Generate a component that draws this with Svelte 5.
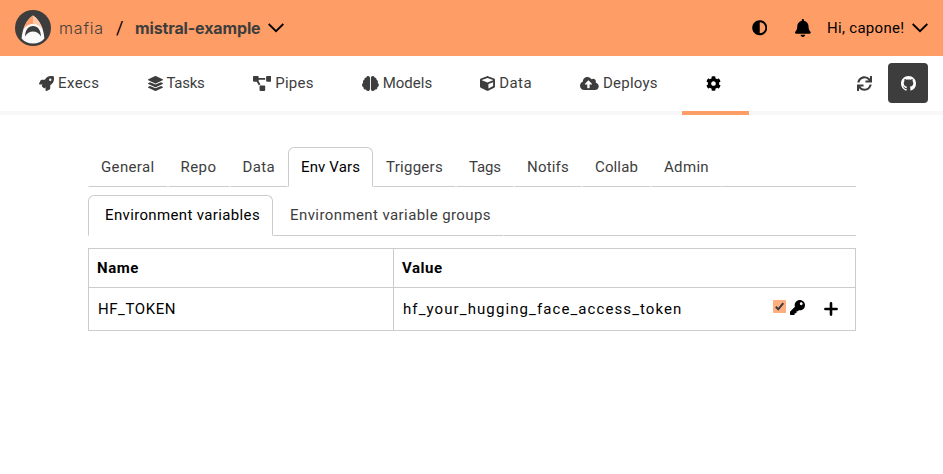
<script>
  const icons = {
    rocket: { w: 512, d: 'M505.12 19.09c-1.19-5.53-6.66-11-12.21-12.18C460.72 0 435.51 0 410.41 0 307.18 0 245.27 55.2 199.05 128H94.84c-16.35.02-35.56 11.88-42.89 26.48L2.52 253.3A28.4 28.4 0 0 0 0 264a24 24 0 0 0 24 24h103.82l-22.48 22.47c-11.36 11.36-13 32.26 0 45.25l50.91 50.9c11.15 11.19 32.15 13.16 45.27 0L224 384.16V488a24 24 0 0 0 24 24 28.56 28.56 0 0 0 10.71-2.52l98.73-49.39c14.63-7.3 26.5-26.5 26.5-42.86V312.8C456.6 266.48 512 204.4 512 101.7c.08-25.2.08-50.4-6.88-82.61ZM384.04 168A40 40 0 1 1 424.05 128a40.02 40.02 0 0 1-40.01 40Z' },
    layers: { w: 512, d: 'M12.41 148.02l232.94 105.67c6.8 3.09 14.49 3.09 21.29 0l232.94-105.67c16.55-7.51 16.55-32.52 0-40.03L266.65 2.31a25.607 25.607 0 0 0-21.29 0L12.41 107.98c-16.55 7.51-16.55 32.53 0 40.04zm487.18 88.28l-58.09-26.33-161.64 73.27c-7.56 3.43-15.59 5.17-23.86 5.17s-16.29-1.74-23.86-5.17L70.51 209.97l-58.1 26.33c-16.55 7.5-16.55 32.5 0 40l232.94 105.59c6.8 3.08 14.49 3.08 21.29 0L499.59 276.3c16.55-7.5 16.55-32.5 0-40zm0 127.8l-57.87-26.23-161.86 73.37c-7.56 3.43-15.59 5.17-23.86 5.17s-16.29-1.74-23.86-5.17L70.29 337.87 12.41 364.1c-16.55 7.5-16.55 32.5 0 40l232.94 105.59c6.8 3.08 14.49 3.08 21.29 0L499.59 404.1c16.55-7.5 16.55-32.5 0-40z' },
    diagram: { w: 640, d: 'M384 320H256c-17.67 0-32 14.33-32 32v128c0 17.67 14.33 32 32 32h128c17.67 0 32-14.33 32-32V352c0-17.67-14.33-32-32-32zM192 32c0-17.67-14.33-32-32-32H32C14.33 0 0 14.33 0 32v128c0 17.67 14.33 32 32 32h95.72l73.16 128.04C211.98 300.98 232.4 288 256 288h.28L192 175.51V128h224V64H192V32zM608 0H480c-17.67 0-32 14.33-32 32v128c0 17.67 14.33 32 32 32h128c17.67 0 32-14.33 32-32V32c0-17.67-14.33-32-32-32z' },
    brain: { w: 576, d: 'M208 0c-29.9 0-54.7 20.5-61.8 48.2-.8 0-1.4-.2-2.2-.2-35.3 0-64 28.7-64 64 0 4.8.6 9.5 1.7 14C52.5 138 32 166.6 32 200c0 12.6 3.2 24.3 8.3 34.9C16.3 248.7 0 274.3 0 304c0 33.3 20.4 61.9 49.4 73.9-.9 4.6-1.4 9.3-1.4 14.1 0 39.8 32.2 72 72 72 4.1 0 8.1-.5 12-1.2 9.6 28.5 36.2 49.2 68 49.2 39.8 0 72-32.2 72-72V64c0-35.3-28.7-64-64-64zm368 304c0-29.7-16.3-55.3-40.3-69.1 5.2-10.6 8.3-22.3 8.3-34.9 0-33.4-20.5-62-49.7-74 1-4.5 1.7-9.2 1.7-14 0-35.3-28.7-64-64-64-.8 0-1.5.2-2.2.2C422.7 20.5 397.9 0 368 0c-35.3 0-64 28.6-64 64v376c0 39.8 32.2 72 72 72 31.8 0 58.4-20.7 68-49.2 3.9.7 7.9 1.2 12 1.2 39.8 0 72-32.2 72-72 0-4.8-.5-9.5-1.4-14.1 29-12 49.4-40.6 49.4-73.9z' },
    cube: { w: 512, d: 'M239.1 6.3l-208 78c-18.7 7-31.1 25-31.1 45v225.1c0 18.2 10.3 34.8 26.5 42.9l208 104c13.5 6.8 29.4 6.8 42.9 0l208-104c16.3-8.1 26.5-24.8 26.5-42.9V129.3c0-20-12.4-37.9-31.1-44.9l-208-78C262 2.2 250 2.2 239.1 6.3zM256 68.4l192 72v1.1l-192 78-192-78v-1.1l192-72zm32 356V275.5l160-65v133.9l-160 80z' },
    cloud: { w: 640, d: 'M537.6 226.6c4.1-10.7 6.4-22.4 6.4-34.6 0-53-43-96-96-96-19.7 0-38.1 6-53.3 16.2C367 64.2 315.3 32 256 32c-88.4 0-160 71.6-160 160 0 2.7.1 5.4.2 8.1C40.2 219.8 0 273.2 0 336c0 79.5 64.5 144 144 144h368c70.7 0 128-57.3 128-128 0-61.9-44-113.6-102.4-125.4zM393.4 288H328v112c0 8.8-7.2 16-16 16h-48c-8.8 0-16-7.2-16-16V288h-65.4c-14.3 0-21.4-17.2-11.3-27.3l105.4-105.4c6.2-6.2 16.4-6.2 22.6 0l105.4 105.4c10.1 10.1 2.9 27.3-11.3 27.3z' },
    cog: { w: 512, d: 'M487.4 315.7l-42.6-24.6c4.3-23.2 4.3-47 0-70.2l42.6-24.6c4.9-2.8 7.1-8.6 5.5-14-11.1-35.6-30-67.8-54.7-94.6-3.8-4.1-10-5.1-14.8-2.3L380.8 110c-17.9-15.4-38.5-27.3-60.8-35.1V25.8c0-5.6-3.9-10.5-9.4-11.7-36.7-8.2-74.3-7.8-109.2 0-5.5 1.2-9.4 6.1-9.4 11.7V75c-22.2 7.9-42.8 19.8-60.8 35.1L88.7 85.5c-4.9-2.8-11-1.9-14.8 2.3-24.7 26.7-43.6 58.9-54.7 94.6-1.7 5.4.6 11.2 5.5 14L67.3 221c-4.3 23.2-4.3 47 0 70.2l-42.6 24.6c-4.9 2.8-7.1 8.6-5.5 14 11.1 35.6 30 67.8 54.7 94.6 3.8 4.1 10 5.1 14.8 2.3l42.6-24.6c17.9 15.4 38.5 27.3 60.8 35.1v49.2c0 5.6 3.9 10.5 9.4 11.7 36.7 8.2 74.3 7.8 109.2 0 5.5-1.2 9.4-6.1 9.4-11.7v-49.2c22.2-7.9 42.8-19.8 60.8-35.1l42.6 24.6c4.9 2.8 11 1.9 14.8-2.3 24.7-26.7 43.6-58.9 54.7-94.6 1.5-5.5-.7-11.3-5.6-14.1zM256 336c-44.1 0-80-35.9-80-80s35.9-80 80-80 80 35.9 80 80-35.9 80-80 80z' },
    adjust: { w: 512, d: 'M8 256c0 136.966 111.033 248 248 248s248-111.034 248-248S392.966 8 256 8 8 119.033 8 256zm248 184V72c101.705 0 184 82.311 184 184 0 101.705-82.311 184-184 184z' },
    bell: { w: 448, d: 'M224 512c35.32 0 63.97-28.65 63.97-64H160.03c0 35.35 28.65 64 63.97 64zm215.39-149.71c-19.32-20.76-55.47-51.99-55.47-154.29 0-77.7-54.48-139.9-127.94-155.16V32c0-17.67-14.32-32-31.98-32s-31.98 14.33-31.98 32v20.84C118.56 68.1 64.08 130.3 64.08 208c0 102.3-36.15 133.53-55.47 154.29-6 6.45-8.66 14.16-8.61 21.71.11 16.4 12.98 32 32.1 32h383.8c19.12 0 32-15.6 32.1-32 .05-7.55-2.61-15.27-8.61-21.71z' },
    sync: { w: 512, d: 'M440.65 12.57l4 82.77A247.16 247.16 0 0 0 255.83 8C134.73 8 33.91 94.92 12.29 209.82A12 12 0 0 0 24.09 224h49.05a12 12 0 0 0 11.67-9.26 175.91 175.91 0 0 1 317-56.94l-101.46-4.86a12 12 0 0 0-12.57 12v47.41a12 12 0 0 0 12 12H500a12 12 0 0 0 12-12V12a12 12 0 0 0-12-12h-47.37a12 12 0 0 0-11.98 12.57zM255.83 432a175.61 175.61 0 0 1-146-77.8l101.8 4.87a12 12 0 0 0 12.57-12v-47.4a12 12 0 0 0-12-12H12a12 12 0 0 0-12 12V500a12 12 0 0 0 12 12h47.35a12 12 0 0 0 12-12.6l-4.15-82.57A247.17 247.17 0 0 0 255.83 504c121.11 0 221.93-86.92 243.55-201.82a12 12 0 0 0-11.8-14.18h-49.05a12 12 0 0 0-11.67 9.26A175.86 175.86 0 0 1 255.83 432z' },
    key: { w: 512, d: 'M512 176.001C512 273.203 433.202 352 336 352c-11.22 0-22.19-1.062-32.827-3.069l-24.012 27.014A23.999 23.999 0 0 1 261.223 384H224v40c0 13.255-10.745 24-24 24h-40v40c0 13.255-10.745 24-24 24H24c-13.255 0-24-10.745-24-24v-78.059c0-6.365 2.529-12.47 7.029-16.971l161.802-161.802C163.108 213.814 160 195.271 160 176 160 78.798 238.797.001 335.999 0 433.488-.001 512 78.511 512 176.001zM336 128c0 26.51 21.49 48 48 48s48-21.49 48-48-21.49-48-48-48-48 21.49-48 48z' }
  };

  const nav = [
    { icon: 'rocket', label: 'Execs', width: 41.5 },
    { icon: 'layers', label: 'Tasks', width: 38 },
    { icon: 'diagram', label: 'Pipes', width: 38.5 },
    { icon: 'brain', label: 'Models', width: 49.5 },
    { icon: 'cube', label: 'Data', width: 33 },
    { icon: 'cloud', label: 'Deploys', width: 55 }
  ];

  const tabs = [
    { label: 'General', width: 53.5 },
    { label: 'Repo', width: 36 },
    { label: 'Data', width: 32.5 },
    { label: 'Env Vars', width: 59, active: true },
    { label: 'Triggers', width: 57 },
    { label: 'Tags', width: 32 },
    { label: 'Notifs', width: 42 },
    { label: 'Collab', width: 43 },
    { label: 'Admin', width: 45 }
  ];

  // Spreads the letters of a label evenly over a fixed width.
  function fit(node, width) {
    const natural = node.getBoundingClientRect().width;
    node.style.letterSpacing = `${(width - natural) / node.textContent.length}px`;
    node.style.width = `${width}px`;
  }
</script>

{#snippet icon(name, size)}
  <svg class="icon" height={size} width={(size * icons[name].w) / 512} viewBox="0 0 {icons[name].w} 512" aria-hidden="true">
    <path d={icons[name].d} />
  </svg>
{/snippet}

{#snippet chevron()}
  <svg class="chevron" width="16" height="10" viewBox="0 0 16 10" aria-hidden="true">
    <path d="M.7 1L8 8.200 15.300 1" />
  </svg>
{/snippet}

<header>
  <svg class="logo" width="36" height="36" viewBox="0 0 36 36" aria-hidden="true">
    <circle cx="18" cy="18" r="18" fill="#3d3d3d" />
    <path d="M18 5.600C12.500 9 7.500 17 6.600 28.500c2.700 3.200 6.700 5.100 11.400 5.100s8.700-1.900 11.400-5.100C28.500 17 23.500 9 18 5.600z" fill="#fafafa" />
    <path d="M18 5.600C13.500 8.500 10 13.500 8 20.500c2-4 5.500-6.500 10-6.500z" fill="#fe9d67" />
    <path d="M18 5.600c4.500 2.900 8 7.900 10 14.900-2-4-5.500-6.500-10-6.500z" fill="#ffc8a6" />
    <path d="M10 26.500c.3-6.500 3.300-10.500 8-10.500s7.700 4 8 10.500c-2-3.500-4.600-5-8-5s-6 1.500-8 5z" fill="#3d3d3d" />
  </svg>
  <span class="crumb owner" use:fit={45}>mafia</span>
  <span class="slash">/</span>
  <span class="crumb project" use:fit={125.5}>mistral-example</span>
  {@render chevron()}
  <div class="tools">
    <span class="contrast">{@render icon('adjust', 15.5)}</span>
    <span class="bell">{@render icon('bell', 18)}</span>
    <span class="fit" use:fit={77.5}>Hi, capone!</span>
    {@render chevron()}
  </div>
</header>

<nav>
  {#each nav as item}
    <a class="item">{@render icon(item.icon, 15)}<span class="fit" use:fit={item.width}>{item.label}</span></a>
  {/each}
  <a class="item current">{@render icon('cog', 15)}</a>
  <div class="actions">
    {@render icon('sync', 15)}
    <button class="github" aria-label="GitHub">
      <svg width="15" height="15" viewBox="0 0 16 16" aria-hidden="true"><path fill="#fff" d="M8 0C3.58 0 0 3.58 0 8c0 3.54 2.29 6.53 5.47 7.59.4.07.55-.17.55-.38 0-.19-.01-.82-.01-1.49-2.01.37-2.53-.49-2.69-.94-.09-.23-.48-.94-.82-1.13-.28-.15-.68-.52-.01-.53.63-.01 1.08.58 1.23.82.72 1.21 1.87.87 2.33.66.07-.52.28-.87.51-1.07-1.78-.2-3.64-.89-3.64-3.95 0-.87.31-1.59.82-2.15-.08-.2-.36-1.02.08-2.12 0 0 .67-.21 2.2.82.64-.18 1.32-.27 2-.27.68 0 1.36.09 2 .27 1.53-1.04 2.2-.82 2.2-.82.44 1.1.16 1.92.08 2.12.51.56.82 1.27.82 2.15 0 3.07-1.87 3.75-3.65 3.95.29.25.54.73.54 1.48 0 1.07-.01 1.93-.01 2.2 0 .21.15.46.55.38A8.013 8.013 0 0016 8c0-4.42-3.58-8-8-8z" /></svg>
    </button>
  </div>
</nav>

<main>
  <div class="tabs">
    {#each tabs as tab}
      <a class="tab" class:active={tab.active}><span class="fit" use:fit={tab.width}>{tab.label}</span></a>
    {/each}
    <div class="rest"></div>
  </div>
  <div class="tabs sub">
    <a class="tab active"><span class="fit" use:fit={155}>Environment variables</span></a>
    <a class="tab"><span class="fit" use:fit={201}>Environment variable groups</span></a>
    <div class="rest"></div>
  </div>
  <div class="table">
    <div class="row head">
      <div class="name"><span class="fit" use:fit={42}>Name</span></div>
      <div class="value"><span class="fit" use:fit={40.5}>Value</span></div>
    </div>
    <div class="row">
      <div class="name"><span class="fit" use:fit={78}>HF_TOKEN</span></div>
      <div class="value">
        <span class="fit" use:fit={279.5}>hf_your_hugging_face_access_token</span>
        <div class="controls">
          <span class="check">
            <svg width="13" height="13" viewBox="0 0 13 13" aria-hidden="true"><path d="M2.800 6.700l2.500 2.600 5-6.200" /></svg>
          </span>
          <span class="key">{@render icon('key', 15)}</span>
          <svg class="plus" width="14" height="14" viewBox="0 0 14 14" aria-hidden="true"><path d="M7 1.400v11.200M1.400 7h11.200" /></svg>
        </div>
      </div>
    </div>
  </div>
</main>

<style>
  :global(body) {
    background: #fff;
    color: #000;
    font: 15px/20px Roboto, "Liberation Sans", sans-serif;
  }

  svg {
    display: block;
    flex: none;
  }

  .icon {
    fill: currentColor;
  }

  .fit,
  .crumb {
    display: inline-block;
    flex: none;
    white-space: nowrap;
  }

  header {
    box-sizing: border-box;
    display: flex;
    align-items: center;
    height: 56px;
    padding: 0 15px;
    background: #ff9d66;
  }

  .crumb {
    margin-left: 8px;
    color: #3d3d3d;
    font-family: Inter, sans-serif;
    font-size: 16px;
  }

  .owner {
    font-weight: 300;
  }

  .slash {
    width: 7px;
    margin: 0 4px 0 12px;
    font-size: 18px;
  }

  .project {
    font-weight: 700;
  }

  .chevron {
    margin: 0 0 1px 7.500px;
    fill: none;
    stroke: #000;
    stroke-width: 1.800;
  }

  .tools {
    display: flex;
    align-items: center;
    margin-left: auto;
  }

  .contrast {
    margin-right: 28px;
  }

  .bell {
    margin-right: 16px;
  }

  nav {
    box-sizing: border-box;
    display: flex;
    height: 59px;
    padding: 0 15px;
    border-bottom: 4px solid #f8f8f8;
    color: #3d3d3d;
  }

  .item {
    box-sizing: border-box;
    display: flex;
    align-items: center;
    gap: 4px;
    height: 55px;
    padding: 0 24px 1px;
  }

  .current {
    height: 59px;
    padding-right: 28px;
    border-bottom: 4px solid #ff9d66;
    color: #000;
  }

  .actions {
    display: flex;
    align-items: center;
    gap: 16px;
    margin-left: auto;
    padding-bottom: 1px;
  }

  .github {
    display: flex;
    align-items: center;
    justify-content: center;
    width: 40px;
    height: 40px;
    padding: 0;
    border: 0;
    border-radius: 4px;
    background: #3d3d3d;
  }

  main {
    width: 768px;
    margin: 32px 0 0 88px;
  }

  .tabs {
    display: flex;
    height: 40px;
  }

  .tab {
    box-sizing: border-box;
    height: 40px;
    padding: 9px 12px 0;
    border: 1px solid transparent;
    border-bottom-color: #ccc;
    color: #3d3d3d;
  }

  .tab.active {
    border-color: #ccc #ccc transparent;
    border-radius: 6px 6px 0 0;
    color: #000;
  }

  .rest {
    flex: 1;
    border-bottom: 1px solid #ccc;
  }

  .sub,
  .sub .tab {
    height: 41px;
  }

  .sub {
    margin-top: 8px;
  }

  .sub .tab {
    padding-left: 16px;
  }

  .table {
    margin-top: 12px;
    border: 1px solid #ccc;
  }

  .row {
    display: flex;
    height: 42px;
  }

  .row.head {
    height: 38px;
    border-bottom: 1px solid #ccc;
    font-weight: 700;
  }

  .name,
  .value {
    box-sizing: border-box;
    display: flex;
    align-items: center;
    padding-left: 9px;
  }

  .name {
    width: 305px;
    border-right: 1px solid #ccc;
  }

  .head .name,
  .head .value {
    padding-left: 8px;
  }

  .value {
    flex: 1;
  }

  .controls {
    display: flex;
    align-items: center;
    margin: 0 17px 0 auto;
  }

  .check {
    margin: 0 4px 5px 0;
    border-radius: 1px;
    background: #ffae80;
  }

  .check path {
    fill: none;
    stroke: #3d3d3d;
    stroke-width: 2;
  }

  .key {
    margin: 0 19.500px 3px 0;
  }

  .plus path {
    stroke: #000;
    stroke-width: 2.600;
    stroke-linecap: round;
  }
</style>
